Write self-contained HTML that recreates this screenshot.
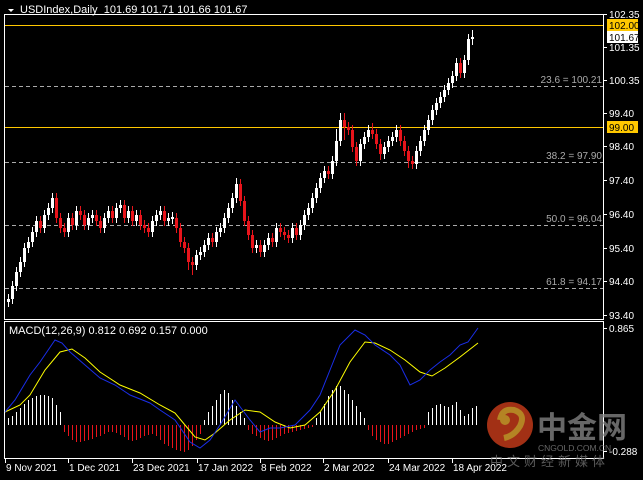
<!DOCTYPE html>
<html><head><meta charset="utf-8"><style>
html,body{margin:0;padding:0;background:#000;width:643px;height:480px;overflow:hidden}
svg{display:block}
text{font-family:"Liberation Sans",sans-serif;font-size:10px;fill:#fff}
</style></head><body>
<svg width="643" height="480" xmlns="http://www.w3.org/2000/svg">
<rect x="0" y="0" width="643" height="480" fill="#000"/>
<rect x="4.5" y="14.5" width="599" height="305" fill="none" stroke="#fff"/>
<rect x="4.5" y="321.5" width="599" height="137" fill="none" stroke="#fff"/>
<rect x="5" y="25" width="598" height="1" fill="#ffc800"/>
<rect x="5" y="127" width="598" height="1" fill="#ffc800"/>
<g stroke="#aaa" stroke-dasharray="4,3">
<line x1="5" y1="86.5" x2="603" y2="86.5"/>
<line x1="5" y1="162.5" x2="603" y2="162.5"/>
<line x1="5" y1="225.5" x2="603" y2="225.5"/>
<line x1="5" y1="288.5" x2="603" y2="288.5"/>
</g>
<g text-anchor="end" fill="#aaa">
<text x="602" y="83" style="fill:#aaa">23.6 = 100.21</text>
<text x="602" y="159" style="fill:#aaa">38.2 = 97.90</text>
<text x="602" y="222" style="fill:#aaa">50.0 = 96.04</text>
<text x="602" y="285" style="fill:#aaa">61.8 = 94.17</text>
</g>
<path fill="none" stroke="#fff" d="M8.5 294V307M12.5 281V304M16.5 267V291M20.5 257V277M24.5 243V267M28.5 237V253M32.5 227V247M36.5 216V237M44.5 210V233M48.5 203V220M52.5 193V213M68.5 213V237M76.5 206V230M88.5 213V230M92.5 210V223M104.5 213V233M108.5 206V223M116.5 203V223M120.5 200V213M128.5 206V223M136.5 210V226M152.5 216V237M156.5 210V226M160.5 206V220M168.5 213V226M172.5 212V224M196.5 250V270M200.5 247V260M204.5 240V257M208.5 233V250M216.5 227V247M220.5 223V237M224.5 213V233M228.5 203V223M232.5 193V213M236.5 178V203M256.5 240V253M264.5 240V257M268.5 233V250M276.5 223V247M292.5 223V243M300.5 220V240M304.5 210V230M308.5 203V220M312.5 193V213M316.5 183V203M320.5 173V193M324.5 166V183M332.5 156V179M336.5 129V166M340.5 113V146M360.5 139V166M364.5 132V149M368.5 125V142M384.5 142V159M388.5 136V152M392.5 132V146M396.5 125V142M416.5 146V169M420.5 136V156M424.5 125V146M428.5 115V135M432.5 105V125M436.5 98V115M440.5 92V108M444.5 85V102M448.5 78V95M452.5 71V88M456.5 58V81M464.5 55V78M468.5 34V65M472.5 30V45"/>
<path fill="none" stroke="#fff" stroke-width="3" d="M8.5 299V302M12.5 286V299M16.5 272V286M20.5 262V272M24.5 248V262M28.5 242V248M32.5 232V242M36.5 221V232M44.5 215V228M48.5 208V215M52.5 198V208M68.5 218V232M76.5 211V225M88.5 218V225M92.5 215V218M104.5 218V228M108.5 211V218M116.5 208V218M120.5 205V208M128.5 211V218M136.5 215V221M152.5 221V232M156.5 215V221M160.5 211V215M168.5 218V221M172.5 217V219M196.5 255V265M200.5 252V255M204.5 245V252M208.5 238V245M216.5 232V242M220.5 228V232M224.5 218V228M228.5 208V218M232.5 198V208M236.5 184V198M256.5 245V248M264.5 245V252M268.5 238V245M276.5 228V242M292.5 228V238M300.5 225V235M304.5 215V225M308.5 208V215M312.5 198V208M316.5 188V198M320.5 178V188M324.5 171V178M332.5 161V174M336.5 141V161M340.5 120V141M360.5 144V161M364.5 137V144M368.5 130V137M384.5 147V154M388.5 141V147M392.5 137V141M396.5 130V137M416.5 151V164M420.5 141V151M424.5 130V141M428.5 120V130M432.5 110V120M436.5 103V110M440.5 97V103M444.5 90V97M448.5 83V90M452.5 76V83M456.5 63V76M464.5 60V73M468.5 39V60M472.5 37V39"/>
<path fill="none" stroke="#e8141b" d="M40.5 216V233M56.5 193V223M60.5 213V233M64.5 223V237M72.5 213V230M80.5 206V220M84.5 210V230M96.5 210V226M100.5 216V233M112.5 206V223M124.5 200V223M132.5 206V226M140.5 210V230M144.5 220V233M148.5 223V237M164.5 206V226M176.5 213V233M180.5 223V247M184.5 237V253M188.5 243V270M192.5 257V275M212.5 233V247M240.5 179V206M244.5 196V226M248.5 216V240M252.5 230V253M260.5 240V257M272.5 233V247M280.5 223V237M284.5 227V240M288.5 230V243M296.5 223V240M328.5 166V179M344.5 113V140M348.5 122V135M352.5 125V152M356.5 142V166M372.5 123V139M376.5 129V149M380.5 139V160M400.5 125V146M404.5 136V156M408.5 146V168M412.5 156V169M460.5 58V78"/>
<path fill="none" stroke="#e8141b" stroke-width="3" d="M40.5 221V228M56.5 198V218M60.5 218V228M64.5 228V232M72.5 218V225M80.5 211V215M84.5 215V225M96.5 215V221M100.5 221V228M112.5 211V218M124.5 205V218M132.5 211V221M140.5 215V225M144.5 225V228M148.5 228V232M164.5 211V221M176.5 218V228M180.5 228V242M184.5 242V248M188.5 248V262M192.5 262V265M212.5 238V242M240.5 184V201M244.5 201V221M248.5 221V235M252.5 235V248M260.5 245V252M272.5 238V242M280.5 228V232M284.5 232V235M288.5 235V238M296.5 228V235M328.5 171V174M344.5 120V127M348.5 127V130M352.5 130V147M356.5 147V161M372.5 130V134M376.5 134V144M380.5 144V154M400.5 130V141M404.5 141V151M408.5 151V161M412.5 161V164M460.5 63V73"/>
<path fill="none" stroke="#fff" d="M8.5 425V418M12.5 425V416M16.5 425V412M20.5 425V408M24.5 425V404M28.5 425V400M32.5 425V398M36.5 425V396M40.5 425V395M44.5 425V395M48.5 425V396M52.5 425V398M56.5 425V405M60.5 425V412M204.5 425V420M208.5 425V412M212.5 425V406M216.5 425V400M220.5 425V394M224.5 425V390M228.5 425V393M232.5 425V400M236.5 425V406M240.5 425V412M244.5 425V418M316.5 425V418M320.5 425V412M324.5 425V404M328.5 425V396M332.5 425V390M336.5 425V386M340.5 425V386M344.5 425V390M348.5 425V394M352.5 425V400M356.5 425V406M360.5 425V412M364.5 425V418M428.5 425V412M432.5 425V408M436.5 425V405M440.5 425V404M444.5 425V406M448.5 425V407M452.5 425V405M456.5 425V402M460.5 425V410M464.5 425V416M468.5 425V414M472.5 425V408M476.5 425V406"/>
<path fill="none" stroke="#e8141b" d="M64.5 425V432M68.5 425V436M72.5 425V440M76.5 425V442M80.5 425V442M84.5 425V441M88.5 425V440M92.5 425V439M96.5 425V437M100.5 425V436M104.5 425V434M108.5 425V432M112.5 425V432M116.5 425V433M120.5 425V435M124.5 425V437M128.5 425V440M132.5 425V441M136.5 425V440M140.5 425V438M144.5 425V436M148.5 425V435M152.5 425V434M156.5 425V436M160.5 425V440M164.5 425V444M168.5 425V446M172.5 425V448M176.5 425V450M180.5 425V451M184.5 425V452M188.5 425V450M192.5 425V446M196.5 425V440M200.5 425V434M248.5 425V430M252.5 425V434M256.5 425V436M260.5 425V438M264.5 425V440M268.5 425V441M272.5 425V440M276.5 425V438M280.5 425V436M284.5 425V434M288.5 425V433M292.5 425V432M296.5 425V431M300.5 425V430M304.5 425V429M308.5 425V428M312.5 425V427M368.5 425V430M372.5 425V436M376.5 425V440M380.5 425V442M384.5 425V444M388.5 425V444M392.5 425V442M396.5 425V440M400.5 425V438M404.5 425V436M408.5 425V434M412.5 425V432M416.5 425V430M420.5 425V429M424.5 425V428"/>
<polyline fill="none" stroke="#ffff00" points="5,412 20,405 30,395 45,370 60,352 72,349 85,358 100,372 120,385 140,393 160,405 175,413 185,425 195,437 205,440 215,433 230,420 245,410 260,412 275,422 290,428 305,425 320,412 335,390 350,362 365,342 375,343 390,350 405,360 420,372 432,376 445,368 460,357 478,343"/>
<polyline fill="none" stroke="#1a2ee8" points="5,412 15,400 30,375 40,362 55,340 62,343 70,352 85,365 100,378 115,385 130,395 150,403 160,410 175,420 190,442 200,448 210,440 220,425 235,400 250,420 260,432 270,428 280,428 295,425 310,410 320,395 330,370 340,345 355,330 365,335 375,345 390,355 400,365 410,385 420,380 430,370 440,362 450,355 460,345 468,342 478,328"/>
<polygon points="8,9 14,9 11,12" fill="#fff"/>
<text x="20" y="13" style="font-size:11px">USDIndex,Daily &#160;101.69 101.71 101.66 101.67</text>
<text x="9" y="334" style="font-size:11px">MACD(12,26,9) 0.812 0.692 0.157 0.000</text>
<path stroke="#fff" d="M604 14.5H607M604 47.5H607M604 80.5H607M604 113.5H607M604 146.5H607M604 180.5H607M604 214.5H607M604 248.5H607M604 281.5H607M604 315.5H607M604 328.5H607M604 451.5H607"/>
<text x="609" y="18">102.35</text>
<text x="609" y="51">101.35</text>
<text x="609" y="84">100.35</text>
<text x="609" y="117">99.40</text>
<text x="609" y="150">98.40</text>
<text x="609" y="184">97.40</text>
<text x="609" y="218">96.40</text>
<text x="609" y="252">95.40</text>
<text x="609" y="285">94.40</text>
<text x="609" y="319">93.40</text>
<rect x="607" y="19" width="31" height="12" fill="#ffc800"/>
<text x="609" y="29" style="fill:#000">102.00</text>
<rect x="607" y="31" width="31" height="12" fill="#fff"/>
<text x="609" y="41" style="fill:#000">101.67</text>
<rect x="607" y="121" width="31" height="12" fill="#ffc800"/>
<text x="609" y="131" style="fill:#000">99.00</text>
<text x="609" y="332">0.865</text>
<text x="609" y="455">-0.288</text>
<path stroke="#fff" d="M5.5 459V463M68.5 459V463M132.5 459V463M197.5 459V463M260.5 459V463M323.5 459V463M388.5 459V463M452.5 459V463"/>
<text x="6" y="471">9 Nov 2021</text>
<text x="69" y="471">1 Dec 2021</text>
<text x="133" y="471">23 Dec 2021</text>
<text x="198" y="471">17 Jan 2022</text>
<text x="261" y="471">8 Feb 2022</text>
<text x="324" y="471">2 Mar 2022</text>
<text x="389" y="471">24 Mar 2022</text>
<text x="453" y="471">18 Apr 2022</text>
<g opacity="0.75">
<circle cx="510" cy="425" r="23" fill="#d8401c"/>
<path d="M500,420 q2,-12 14,-10 q12,4 6,16 q-6,10 -16,12" fill="none" stroke="#f0b030" stroke-width="6"/>
<circle cx="505" cy="420" r="5" fill="#f0b030"/>
<text x="537" y="438" style="font-size:30px;fill:#8a8a8a;font-family:'Noto Sans CJK SC',sans-serif;font-weight:bold">中金网</text>
<text x="538" y="451" style="font-size:8.5px;fill:#8a8a8a">CNGOLD.COM.CN</text>
<text x="490" y="466" style="font-size:13px;fill:#777;letter-spacing:4px;font-family:'Noto Sans CJK SC',sans-serif">中文财经新媒体</text>
</g>
</svg>
</body></html>
